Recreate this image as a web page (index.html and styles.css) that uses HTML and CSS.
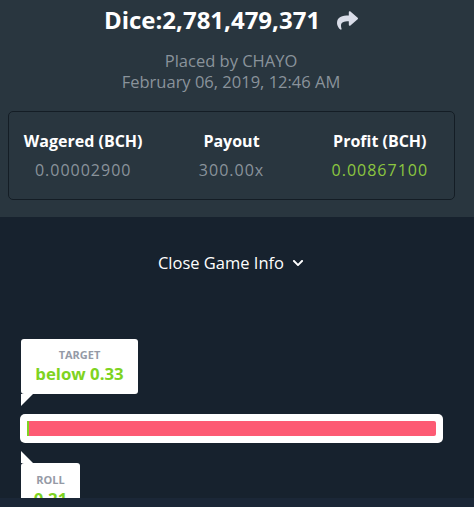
FILE: index.html
```html
<!DOCTYPE html>
<html lang="en">
<head>
  <meta charset="UTF-8">
  <meta name="viewport" content="width=device-width, initial-scale=1.0">
  <title>Game Info</title>
  <link rel="stylesheet" href="styles.css">
</head>

<body>
  <section class="game-info">
    <h1 class="game-title">
      Dice:2,781,479,371
      <svg class="share-icon" viewBox="0 0 512 512"><path d="M503.7 189.8L327.7 37.9C312.3 24.5 288 35.3 288 56v80.1C127.4 137.9 0 170.1 0 322.3c0 61.4 39.6 122.3 83.3 154.1 13.7 9.9 33.1-2.5 28.1-18.6C66.1 312.8 132.9 274.3 288 272.1V360c0 20.7 24.3 31.5 39.7 18.2l176-152c11.1-9.6 11.1-26.8 0-36.4z"/></svg>
    </h1>
    <p class="placed">Placed by CHAYO<br>February 06, 2019, 12:46 AM</p>

    <div class="stats">
      <div class="stat">
        <div class="stat-label">Wagered (BCH)</div>
        <div class="stat-value">0.00002900</div>
      </div>
      <div class="stat">
        <div class="stat-label">Payout</div>
        <div class="stat-value">300.00x</div>
      </div>
      <div class="stat">
        <div class="stat-label">Profit (BCH)</div>
        <div class="stat-value profit">0.00867100</div>
      </div>
    </div>
  </section>

  <section class="game-body">
    <button class="toggle">
      Close Game Info
      <svg class="chevron" viewBox="0 0 448 512"><path d="M207 381.5L12.7 187.1c-9.4-9.4-9.4-24.6 0-33.9l22.7-22.7c9.4-9.4 24.5-9.4 33.9 0L224 284.5l154.7-154c9.4-9.3 24.5-9.3 33.9 0l22.7 22.7c9.4 9.4 9.4 24.6 0 33.9L241 381.5c-9.4 9.4-24.6 9.4-33.9 0z"/></svg>
    </button>

    <div class="slider">
      <div class="bubble bubble-target">
        <div class="bubble-label">TARGET</div>
        <div class="bubble-value">below 0.33</div>
      </div>
      <div class="track">
        <div class="track-fill"><span class="track-win"></span></div>
      </div>
      <div class="bubble bubble-roll">
        <div class="bubble-label">ROLL</div>
        <div class="bubble-value">0.21</div>
      </div>
    </div>
  </section>

  <div class="bottom-strip"></div>
</body>
</html>
```

FILE: styles.css
```css
body {
  margin: 0;
  font-family: "Open Sans", "Liberation Sans", sans-serif;
  background-color: #17222e;
  color: #fff;
}

.game-info {
  background-color: #29363f;
  height: 217px;
  padding: 5px 12px 0 0;
  box-sizing: border-box;
  text-align: center;
}

.game-title {
  margin: 0;
  font-size: 24px;
  font-weight: bold;
  line-height: 30px;
  color: #fff;
  display: flex;
  justify-content: center;
  align-items: center;
  gap: 17px;
}

.share-icon {
  width: 21px;
  height: 21px;
  fill: #d9dde8;
}

.placed {
  margin: 15px 0 0;
  font-size: 16.5px;
  line-height: 21px;
  color: #8a939b;
}

.stats {
  display: flex;
  margin: 19px 7px 0 8px;
  height: 89px;
  border: 1px solid #141d25;
  border-radius: 5px;
  box-sizing: border-box;
  align-items: center;
}

.stat {
  flex: 1;
  text-align: center;
}

.stat-label {
  font-size: 16px;
  font-weight: bold;
  line-height: 22px;
}

.stat-value {
  font-size: 16px;
  line-height: 22px;
  letter-spacing: 1px;
  margin-top: 7px;
  color: #8a939b;
}

.stat-value.profit {
  color: #8cc63f;
}

.game-body {
  height: 281px;
  overflow: hidden;
}

.toggle {
  display: flex;
  align-items: center;
  justify-content: center;
  gap: 8px;
  margin: 34px 0 0;
  width: 462px;
  background: none;
  border: none;
  color: #fff;
  font-family: inherit;
  font-size: 16.5px;
  padding: 0;
}

.chevron {
  width: 12px;
  height: 12px;
  fill: #fff;
}

.slider {
  margin: 65px 0 0 20px;
  width: 423px;
}

.bubble {
  position: relative;
  background-color: #fff;
  border-radius: 3px;
  text-align: center;
  margin-left: 1px;
}

.bubble-target {
  width: 117px;
  height: 55px;
  padding-top: 10px;
  box-sizing: border-box;
  margin-bottom: 20px;
}

.bubble-target::after {
  content: "";
  position: absolute;
  left: 0;
  top: 55px;
  border-top: 12px solid #fff;
  border-right: 12px solid transparent;
}

.bubble-roll {
  width: 59px;
  height: 60px;
  margin-top: 20px;
  padding-top: 11px;
  box-sizing: border-box;
}

.bubble-roll::before {
  content: "";
  position: absolute;
  left: 0;
  top: -12px;
  border-bottom: 12px solid #fff;
  border-right: 12px solid transparent;
}

.bubble-label {
  font-size: 11px;
  font-weight: bold;
  color: #959aa6;
  line-height: 12px;
}

.bubble-value {
  font-size: 16.8px;
  font-weight: bold;
  color: #7ed321;
  line-height: 22px;
  margin-top: 2px;
}

.track {
  background-color: #fff;
  border-radius: 5px;
  padding: 7px;
  height: 29px;
  box-sizing: border-box;
}

.track-fill {
  display: flex;
  height: 15px;
  background-color: #fd5a73;
  border-radius: 2px;
}

.track-win {
  width: 2px;
  background-color: #7ed321;
}

.bottom-strip {
  height: 9px;
  background-color: #1b2737;
}
```
